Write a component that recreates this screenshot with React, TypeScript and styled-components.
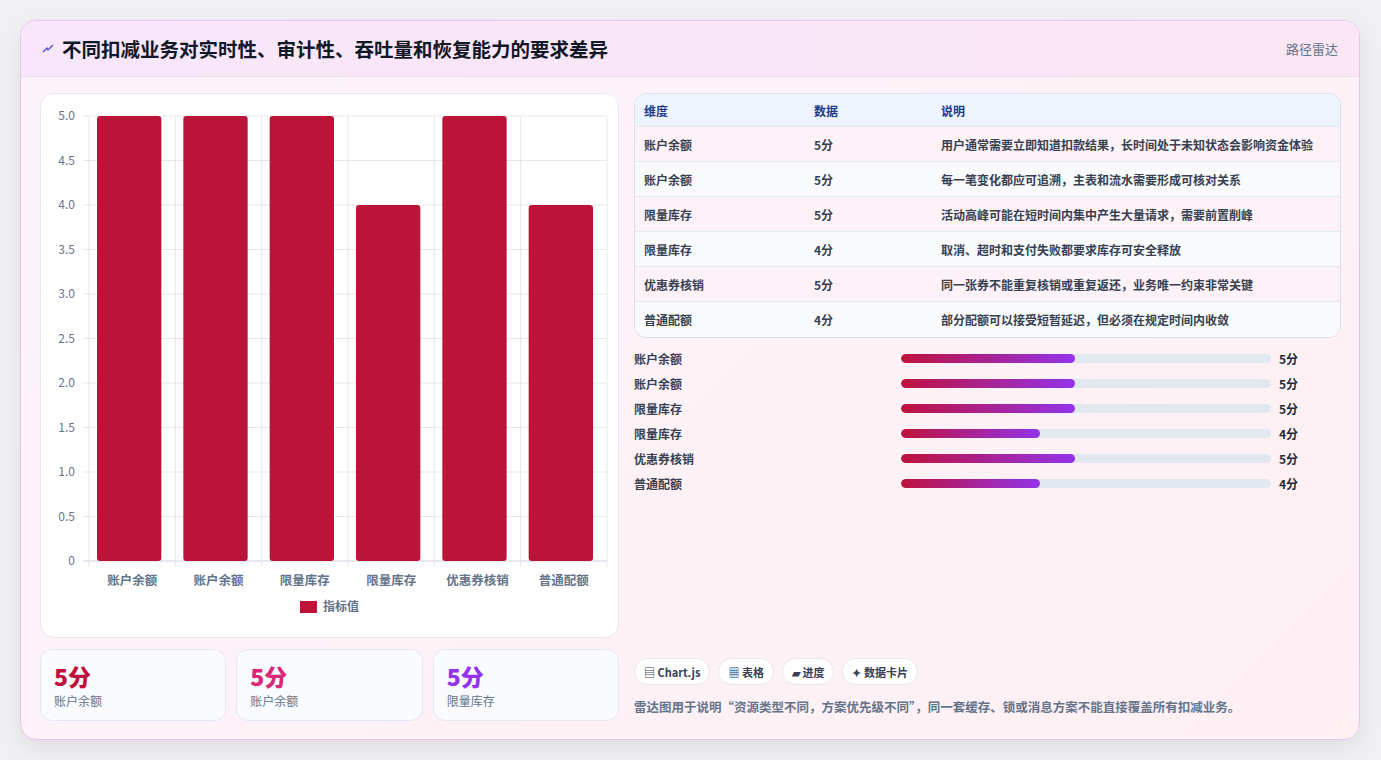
import React from "react";
import styled, { createGlobalStyle } from "styled-components";

const Global = createGlobalStyle`
  body { margin: 0; background: #f1f1f3; font-family: "Noto Sans CJK SC", "Noto Sans", sans-serif; }
`;

const rows = [
  { name: "账户余额", v: 5, note: "用户通常需要立即知道扣款结果，长时间处于未知状态会影响资金体验" },
  { name: "账户余额", v: 5, note: "每一笔变化都应可追溯，主表和流水需要形成可核对关系" },
  { name: "限量库存", v: 5, note: "活动高峰可能在短时间内集中产生大量请求，需要前置削峰" },
  { name: "限量库存", v: 4, note: "取消、超时和支付失败都要求库存可安全释放" },
  { name: "优惠券核销", v: 5, note: "同一张券不能重复核销或重复返还，业务唯一约束非常关键" },
  { name: "普通配额", v: 4, note: "部分配额可以接受短暂延迟，但必须在规定时间内收敛" },
];

const Page = styled.div`
  padding: 20px;
`;

const Card = styled.div`
  width: 1338px;
  height: 718px;
  border: 1px solid #e9c3ef;
  border-radius: 16px;
  background: linear-gradient(135deg, #fdf4fb 0%, #fef0f3 100%);
  box-shadow: 0 8px 24px rgba(0, 0, 0, 0.08);
  overflow: hidden;
  display: flex;
  flex-direction: column;
`;

const Header = styled.div`
  height: 55px;
  display: flex;
  align-items: center;
  justify-content: space-between;
  padding: 0 21px;
  background: linear-gradient(90deg, #f8e6fb 0%, #fbe7f3 100%);
  border-bottom: 1px solid #efdcef;
`;

const Title = styled.h1`
  margin: 0;
  font-size: 19.5px;
  font-weight: 700;
  color: #111827;
  display: flex;
  align-items: center;
  gap: 8px;
`;

const Tag = styled.span`
  font-size: 13px;
  color: #64748b;
`;

const Body = styled.div`
  flex: 1;
  display: grid;
  grid-template-columns: 579px 1fr;
  gap: 15px;
  padding: 16px 18px 18px 19px;
`;

const Col = styled.div`
  display: flex;
  flex-direction: column;
  gap: 11px;
`;

const ChartBox = styled.div`
  height: 543px;
  background: #fff;
  border: 1px solid #ece4f0;
  border-radius: 14px;
`;

const Stats = styled.div`
  display: grid;
  grid-template-columns: repeat(3, 1fr);
  gap: 10px;
`;

const Stat = styled.div`
  height: 72px;
  box-sizing: border-box;
  border: 1px solid #e3e8f5;
  border-radius: 12px;
  background: #f9fbfe;
  padding: 10px 13px;
`;

const StatVal = styled.div<{ $c: string }>`
  font-size: 23px;
  font-weight: 800;
  color: ${(p) => p.$c};
  line-height: 32px;
`;

const StatLabel = styled.div`
  font-size: 12px;
  color: #64748b;
`;

const Table = styled.div`
  border: 1px solid #d8dfee;
  border-radius: 12px;
  overflow: hidden;
  font-size: 12px;
`;

const Row = styled.div<{ $bg: string; $head?: boolean }>`
  display: grid;
  grid-template-columns: 170px 127px 1fr;
  box-sizing: border-box;
  height: ${(p) => (p.$head ? "33px" : "35px")};
  align-items: center;
  padding-left: 9px;
  background: ${(p) => p.$bg};
  color: ${(p) => (p.$head ? "#1e3a8a" : "#374151")};
  font-weight: ${(p) => (p.$head ? 700 : 600)};
  border-bottom: 1px solid #e5e9f2;
  &:last-child { border-bottom: none; }
`;

const Bars = styled.div`
  display: flex;
  flex-direction: column;
  gap: 9px;
  margin-top: 1px;
`;

const BarRow = styled.div`
  display: grid;
  grid-template-columns: 259px 370px 1fr;
  align-items: center;
  column-gap: 8px;
  font-size: 12px;
  font-weight: 600;
  color: #374151;
  height: 16px;
`;

const Track = styled.div`
  height: 9px;
  border-radius: 5px;
  background: #e2e8f0;
  overflow: hidden;
`;

const Fill = styled.div`
  height: 100%;
  border-radius: 5px;
  background: linear-gradient(90deg, #be123c, #9333ea);
`;

const Val = styled.span`
  font-weight: 700;
  color: #1f2937;
`;

const Footer = styled.div`
  margin-top: auto;
  display: flex;
  flex-direction: column;
  gap: 12px;
`;

const Chips = styled.div`
  display: flex;
  gap: 8px;
`;

const Chip = styled.span`
  height: 27px;
  box-sizing: border-box;
  padding: 0 9px;
  border: 1px solid #e5e7eb;
  border-radius: 14px;
  background: #fff;
  display: flex;
  align-items: center;
  font-size: 11px;
  font-weight: 700;
  color: #374151;
`;

const Note = styled.div`
  font-size: 12.5px;
  font-weight: 600;
  color: #64748b;
  margin-bottom: 5px;
`;

function Chart() {
  const x0 = 48, x1 = 566, yTop = 22, yBot = 467;
  const step = (x1 - x0) / 6;
  const ticks = [0, 0.5, 1, 1.5, 2, 2.5, 3, 3.5, 4, 4.5, 5];
  const y = (v: number) => yBot - (v / 5) * (yBot - yTop);
  return (
    <svg width="578" height="541" fontFamily="'Noto Sans CJK SC', sans-serif">
      {ticks.map((t) => (
        <g key={t}>
          <line x1={x0 - 6} x2={x1} y1={y(t)} y2={y(t)} stroke={t === 0 ? "#cbd5e1" : "#e5e7eb"} />
          <text x={x0 - 14} y={y(t) + 4} fontSize="12" fill="#64748b" textAnchor="end">
            {t === 0 ? "0" : t.toFixed(1)}
          </text>
        </g>
      ))}
      {Array.from({ length: 7 }).map((_, i) => (
        <line key={i} x1={x0 + i * step} x2={x0 + i * step} y1={yTop} y2={yBot + 6} stroke="#e5e7eb" />
      ))}
      {rows.map((r, i) => (
        <g key={i}>
          <rect x={x0 + i * step + 8} y={y(r.v)} width={step - 22} height={yBot - y(r.v)} rx="3" fill="#bc1439" />
          <text x={x0 + i * step + step / 2} y={yBot + 24} fontSize="12.5" fontWeight="600" fill="#64748b" textAnchor="middle">
            {r.name}
          </text>
        </g>
      ))}
      <rect x="259" y="507" width="17" height="12" fill="#bc1439" />
      <text x="282" y="517" fontSize="12" fontWeight="600" fill="#64748b">指标值</text>
    </svg>
  );
}

export default function App() {
  return (
    <Page>
      <Global />
      <Card>
        <Header>
          <Title>
            <svg width="12" height="12" viewBox="0 0 12 12">
              <path d="M1 9 L5 5 L6 7 L11 2" stroke="#4f46e5" strokeWidth="1.3" fill="none" />
            </svg>
            不同扣减业务对实时性、审计性、吞吐量和恢复能力的要求差异
          </Title>
          <Tag>路径雷达</Tag>
        </Header>
        <Body>
          <Col>
            <ChartBox>
              <Chart />
            </ChartBox>
            <Stats>
              <Stat><StatVal $c="#be123c">5分</StatVal><StatLabel>账户余额</StatLabel></Stat>
              <Stat><StatVal $c="#db2777">5分</StatVal><StatLabel>账户余额</StatLabel></Stat>
              <Stat><StatVal $c="#9333ea">5分</StatVal><StatLabel>限量库存</StatLabel></Stat>
            </Stats>
          </Col>
          <Col>
            <Table>
              <Row $head $bg="#eef4fd"><span>维度</span><span>数据</span><span>说明</span></Row>
              {rows.map((r, i) => (
                <Row key={i} $bg={i % 2 ? "#f8fafc" : "#fdf2f8"}>
                  <span>{r.name}</span><span>{r.v}分</span><span>{r.note}</span>
                </Row>
              ))}
            </Table>
            <Bars>
              {rows.map((r, i) => (
                <BarRow key={i}>
                  <span>{r.name}</span>
                  <Track><Fill style={{ width: `${r.v * 9.4}%` }} /></Track>
                  <Val>{r.v}分</Val>
                </BarRow>
              ))}
            </Bars>
            <Footer>
              <Chips>
                <Chip>▤ Chart.js</Chip>
                <Chip>▦ 表格</Chip>
                <Chip>▰ 进度</Chip>
                <Chip>✦ 数据卡片</Chip>
              </Chips>
              <Note>雷达图用于说明“资源类型不同，方案优先级不同”，同一套缓存、锁或消息方案不能直接覆盖所有扣减业务。</Note>
            </Footer>
          </Col>
        </Body>
      </Card>
    </Page>
  );
}
